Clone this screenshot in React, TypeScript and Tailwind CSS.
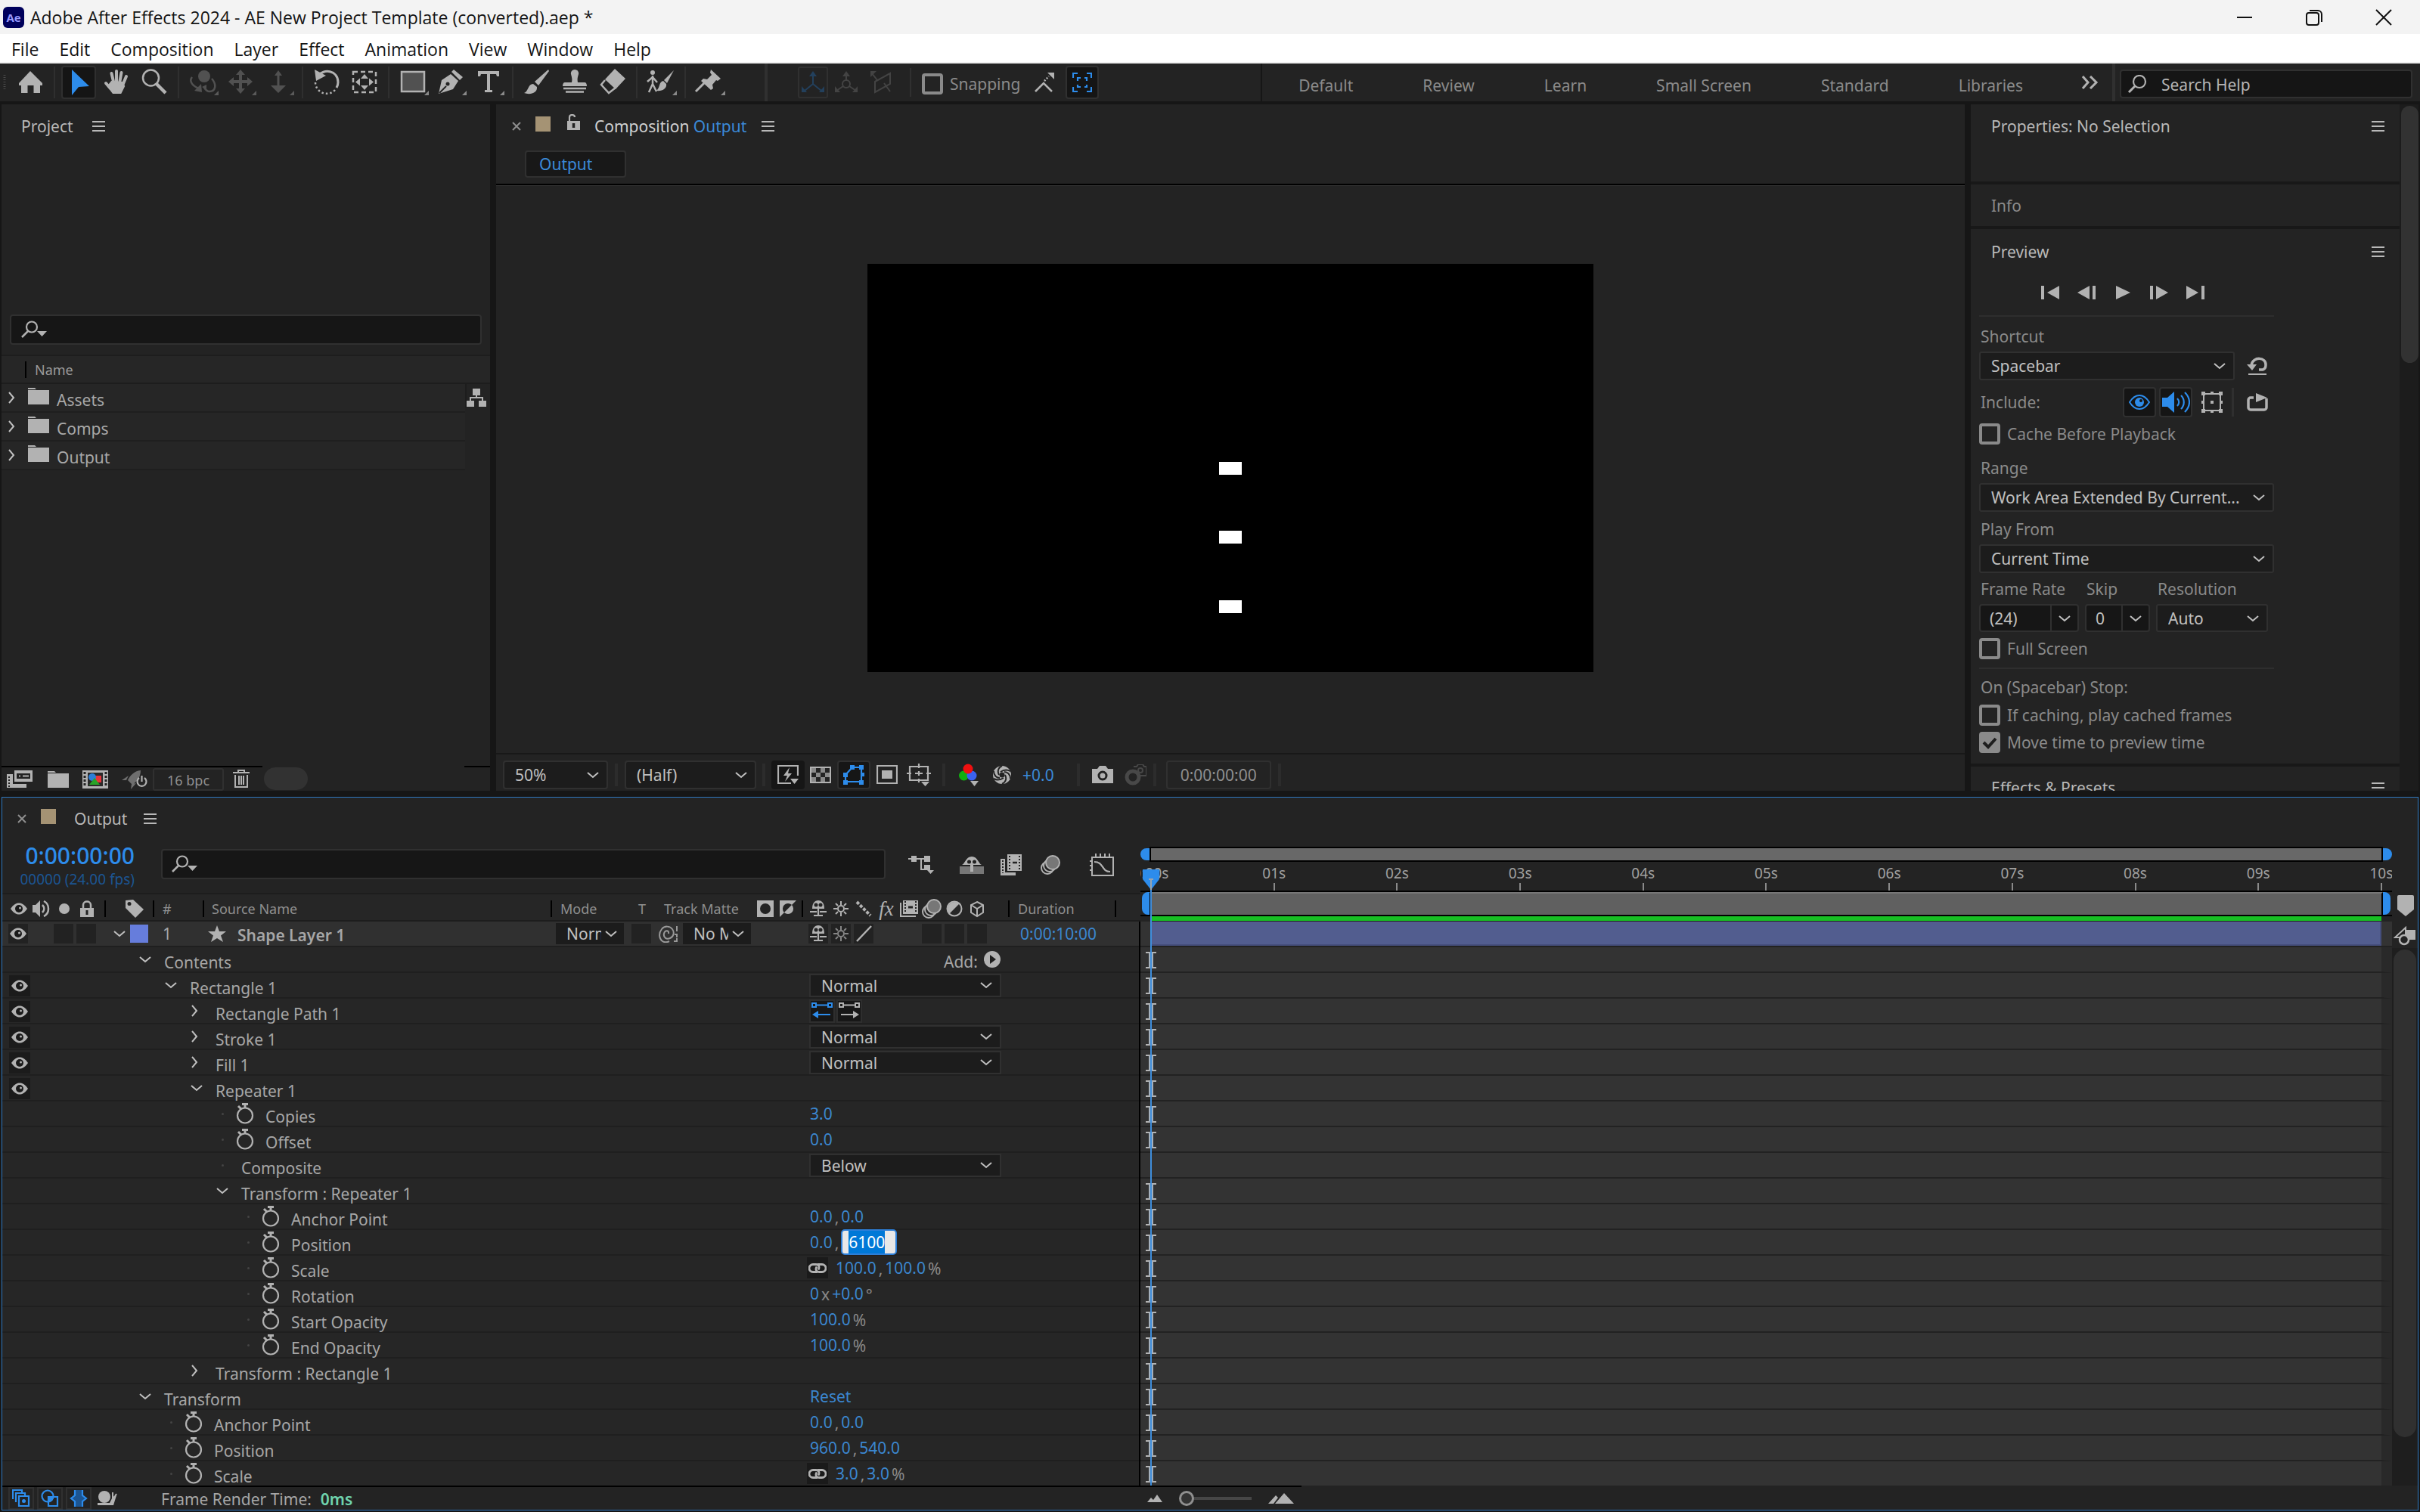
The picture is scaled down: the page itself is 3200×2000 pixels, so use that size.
import { useId } from 'react';
import type { ReactNode } from 'react';

// --- SHARED BITS ---
type SvgProps = { w: number; h: number; className?: string; children: ReactNode };

const Svg = ({ w, h, className = '', children }: SvgProps) => (
  <svg width={w} height={h} viewBox={`0 0 ${w} ${h}`} fill="none" className={`shrink-0 ${className}`} aria-hidden="true">
    {children}
  </svg>
);

const G = '#b2b2b2';
const BLUE = '#2d8ceb';

const ChevronDown = ({ className = '' }: { className?: string }) => (
  <Svg w={16} h={10} className={className}>
    <path d="M1 2l7 6 7-6" stroke="#c0c0c0" strokeWidth="2" />
  </Svg>
);

const ChevronRight = () => (
  <Svg w={10} h={16}>
    <path d="M2 1l6 7-6 7" stroke="#c0c0c0" strokeWidth="2" />
  </Svg>
);

const PanelMenu = ({ label }: { label: string }) => (
  <button type="button" aria-label={label} className="flex">
    <Svg w={17} h={16}>
      <path d="M0 2h17M0 8h17M0 14h17" stroke="#b8b8b8" strokeWidth="2" />
    </Svg>
  </button>
);

const SearchGlyph = () => (
  <Svg w={34} h={24}>
    <circle cx="14" cy="8.500" r="7" stroke={G} strokeWidth="2.200" />
    <path d="M9 14L1 22" stroke={G} strokeWidth="2.500" />
    <path d="M21 14h13l-6.500 7z" fill={G} />
  </Svg>
);

const Eye = () => (
  <Svg w={22} h={16}>
    <path d="M0 8C4 2 8 .5 11 .5S18 2 22 8c-4 6-8 7.500-11 7.500S4 14 0 8z" fill={G} />
    <circle cx="11" cy="8" r="5" fill="#1a1a1a" />
    <circle cx="12.500" cy="7" r="1.500" fill={G} />
  </Svg>
);

const Folder = () => (
  <Svg w={28} h={22}>
    <path d="M0 0h9l2 2H0zM0 3h28v19H0z" fill={G} />
  </Svg>
);

type SelectProps = { label: string; value: string; className: string };

const Select = ({ label, value, className }: SelectProps) => (
  <div className={`relative shrink-0 border-2 border-[#303030] bg-[#1c1c1c] text-[#c0c0c0] ${className}`}>
    <select aria-label={label} defaultValue={value} className="h-full w-full appearance-none bg-transparent pl-[14px] pr-[28px] outline-none">
      <option>{value}</option>
    </select>
    <ChevronDown className="pointer-events-none absolute right-[10px] top-1/2 -mt-[5px]" />
  </div>
);

const Check = ({ label, checked = false }: { label: string; checked?: boolean }) => {
  const id = useId();
  return (
    <div className="flex h-7 items-center gap-[9px]">
      <span className="relative flex h-7 w-7 shrink-0">
        <input
          id={id}
          type="checkbox"
          defaultChecked={checked}
          className="h-7 w-7 appearance-none rounded-[4px] border-4 border-[#8a8a8a] checked:bg-[#8a8a8a]"
        />
        {checked && (
          <Svg w={28} h={28} className="pointer-events-none absolute left-0 top-0">
            <path d="M6 14l6 6L22 9" stroke="#1e1e1e" strokeWidth="4" />
          </Svg>
        )}
      </span>
      <label htmlFor={id} className="whitespace-nowrap">{label}</label>
    </div>
  );
};

// --- TITLE BAR + MENU ---
const TitleBar = () => (
  <header className="flex h-[45px] shrink-0 items-center bg-[#f3f3f3] pl-1 pr-[2px] font-['Open_Sans',sans-serif] text-[23px] text-[#151515]">
    <span className="flex h-7 w-7 shrink-0 items-center justify-center rounded-[6px] bg-[#00005b] text-[15px] font-bold text-[#9999ff]">Ae</span>
    <h1 className="ml-[8px] flex-1 whitespace-nowrap">Adobe After Effects 2024 - AE New Project Template (converted).aep *</h1>
    <button type="button" aria-label="Minimize" className="flex h-full w-[92px] items-center justify-center">
      <Svg w={20} h={20}><path d="M0 10h20" stroke="#111" strokeWidth="2" /></Svg>
    </button>
    <button type="button" aria-label="Restore" className="flex h-full w-[92px] items-center justify-center">
      <Svg w={22} h={22}>
        <rect x="1" y="5" width="16" height="16" rx="3" stroke="#111" strokeWidth="2" />
        <path d="M5 2h11a5 5 0 0 1 5 5v10" stroke="#111" strokeWidth="2" />
      </Svg>
    </button>
    <button type="button" aria-label="Close" className="flex h-full w-[92px] items-center justify-center">
      <Svg w={22} h={22}><path d="M1 1l20 20M21 1L1 21" stroke="#111" strokeWidth="2" /></Svg>
    </button>
  </header>
);

const menus = ['File', 'Edit', 'Composition', 'Layer', 'Effect', 'Animation', 'View', 'Window', 'Help'];

const MenuBar = () => (
  <nav className="flex h-[39px] shrink-0 items-center gap-[27px] border-b-2 border-[#f0f0f0] bg-white pl-[15px] pt-[2px] font-['Open_Sans',sans-serif] text-[23px] text-[#151515]">
    {menus.map((m) => (
      <button key={m} type="button">{m}</button>
    ))}
  </nav>
);

// --- TOOLBAR ---
const D = '#515151';
const corner = <path d="M46 36v6h-6z" fill="#8a8a8a" />;
const cornerDim = <path d="M46 36v6h-6z" fill="#5a5a5a" />;

type Tool = { label: string; icon: ReactNode; on?: boolean };

const toolGroups: Tool[][] = [
  [
    {
      label: 'Home',
      icon: <path d="M25 10l16 16v3h-3v10h-8.500V29h-8v10H13V29h-3v-3z" fill={G} />,
    },
  ],
  [
    { label: 'Selection', on: true, icon: <path d="M16 8l23 22-14 1-9 11z" fill={BLUE} /> },
    {
      label: 'Hand',
      icon: (
        <g stroke={G} strokeWidth="4" strokeLinecap="round">
          <path d="M25 10v15M18.500 13l3 13M31.500 12L29 26M38 17l-5 12M11 26l6 7" />
          <path d="M19 25l13 1 2 4-4 8h-9l-6-8z" fill={G} />
        </g>
      ),
    },
    {
      label: 'Zoom',
      icon: (
        <g stroke={G}>
          <circle cx="20.500" cy="19" r="10.500" strokeWidth="2.500" />
          <path d="M28 27l12 12" strokeWidth="4.500" />
        </g>
      ),
    },
  ],
  [
    {
      label: 'Orbit',
      icon: (
        <>
          <circle cx="27" cy="17" r="8" fill={D} />
          <path d="M11 18c-5 6 2 13 10 15M37 20c7 8 5 17-3 17-3 0-5-2-7-5" stroke={D} strokeWidth="2.500" />
          <path d="M23 27l1 11-10-2z" fill={D} />
          <path d="M24 31l6-3v7z" fill={D} />
          {cornerDim}
        </>
      ),
    },
    {
      label: 'Pan Camera',
      icon: (
        <>
          <path d="M25 14v22M13 24h24" stroke={D} strokeWidth="4" />
          <path d="M25 8l6 7H19zM25 40l6-7H19zM9 24l7-6v12zM41 24l-7-6v12z" fill={D} />
          {cornerDim}
        </>
      ),
    },
    {
      label: 'Dolly',
      icon: (
        <>
          <path d="M25 12v20" stroke={D} strokeWidth="3" />
          <path d="M25 9l5 7H20zM25 39l10-10H15z" fill={D} />
          {cornerDim}
        </>
      ),
    },
  ],
  [
    {
      label: 'Rotation',
      icon: (
        <>
          <path d="M14 16C20 7 40 8 40 25c0 3-1 5-2 7" stroke={G} strokeWidth="3" />
          <path d="M9 8l2 15 13-7z" fill={G} />
          <path d="M36 35a15 15 0 0 1-26-10" stroke={G} strokeWidth="2.500" strokeDasharray="2.500 3" />
        </>
      ),
    },
    {
      label: 'Anchor Point',
      icon: (
        <>
          <rect x="10" y="11" width="30" height="27" stroke={G} strokeWidth="2.500" strokeDasharray="6 4" />
          <path d="M25 14l5 6H20zM25 35l5-6H20zM13 24.500l6-5v10zM37 24.500l-6-5v10z" fill={G} />
        </>
      ),
    },
  ],
  [
    {
      label: 'Rectangle',
      icon: (
        <>
          <rect x="10" y="11" width="30" height="26" fill={D} stroke={G} strokeWidth="2.500" />
          {corner}
        </>
      ),
    },
    {
      label: 'Pen',
      icon: (
        <>
          <path d="M9 40l4-18 12-8 10 9-7 11z" fill={G} />
          <path d="M10 39l9-9" stroke="#232323" strokeWidth="2" />
          <circle cx="21" cy="27" r="2.500" fill="#232323" />
          <path d="M26 11l3-3 12 10-4 4z" fill={G} />
          {corner}
        </>
      ),
    },
    {
      label: 'Type',
      icon: (
        <>
          <path d="M11 10h28v7h-3l-1-3h-8v21h3v3H20v-3h3V14h-8l-1 3h-3z" fill={G} />
          {corner}
        </>
      ),
    },
  ],
  [
    {
      label: 'Brush',
      icon: (
        <>
          <path d="M40 8L22 24l5 5L41 10z" fill={G} />
          <path d="M20 27c-7 0-6 10-12 12 8 3 18 0 17-8z" fill={G} />
        </>
      ),
    },
    {
      label: 'Clone Stamp',
      icon: (
        <>
          <path d="M25 8a5 5 0 0 1 5 6c-1 4-2 6-1 11h9c2 0 3 2 3 5H9c0-3 1-5 3-5h9c1-5 0-7-1-11a5 5 0 0 1 5-6z" fill={G} />
          <path d="M10 33h30M13 37.500h24" stroke={G} strokeWidth="2.500" />
        </>
      ),
    },
    {
      label: 'Eraser',
      icon: (
        <>
          <path d="M28 7l14 13-13 14-14-13z" fill={G} />
          <path d="M15 22l-5 6 10 11 9-7" stroke={G} strokeWidth="2.500" />
        </>
      ),
    },
  ],
  [
    {
      label: 'Roto Brush',
      icon: (
        <>
          <circle cx="14" cy="12" r="3" fill={G} />
          <path d="M14 16v11M14 18l-7 6M14 18l6 7M14 27l-5 11M14 27l5 10" stroke={G} strokeWidth="2.500" />
          <path d="M42 9L29 22l4 4z" fill={G} />
          <path d="M28 23c-6 1-4 9-9 13 8 1 14-3 13-9z" fill={G} />
          {corner}
        </>
      ),
    },
  ],
  [
    {
      label: 'Puppet Pin',
      icon: (
        <>
          <path d="M27 8l13 12-4 3-2-1-5 6 1 5-3 2-13-12 3-3 5 1 6-6-2-3z" fill={G} />
          <path d="M18 26L7 37" stroke={G} strokeWidth="3" />
          {corner}
        </>
      ),
    },
  ],
];

const workspaces = ['Default', 'Review', 'Learn', 'Small Screen', 'Standard', 'Libraries'];

const Toolbar = () => (
  <div className="flex h-[50px] shrink-0 items-center bg-[#232323]">
    <Svg w={15} h={50}>
      <path d="M6 15v20" stroke="#4a4a4a" strokeWidth="3" strokeDasharray="1 2" />
    </Svg>
    {toolGroups.map((group, i) => (
      <div key={i} className="flex items-center">
        {i > 0 && <span className="mx-[6px] h-[42px] w-[2px] bg-[#2f2f2f]" />}
        {group.map((t) => (
          <button
            key={t.label}
            type="button"
            aria-label={t.label}
            className={t.on ? 'mx-[2px] flex h-[44px] w-[46px] items-center justify-center rounded-[4px] border-2 border-[#2f2f2f] bg-[#151515]' : 'flex'}
          >
            <Svg w={50} h={50}>{t.icon}</Svg>
          </button>
        ))}
      </div>
    ))}
    <span className="ml-[48px] h-full w-1 bg-[#303030]" />
    <button type="button" aria-label="Local Axis" className="ml-[40px] flex h-[42px] w-[40px] items-center justify-center rounded-[3px] border-2 border-[#303030]">
      <Svg w={30} h={30}>
        <path d="M15 17V4M15 17L4 26M15 17l11 9" stroke="#23405c" strokeWidth="2" />
        <path d="M15 0l5 7H10zM0 28v-8l7 8zM30 28v-8l-7 8z" fill="#23405c" />
      </Svg>
    </button>
    <button type="button" aria-label="World Axis" className="ml-[8px] flex">
      <Svg w={32} h={30}>
        <circle cx="16" cy="17" r="5" stroke="#434343" strokeWidth="2" />
        <path d="M16 12V4M12 20l-9 6M20 20l9 6" stroke="#434343" strokeWidth="2" />
        <path d="M16 0l5 7H11zM1 28v-8l7 8zM31 28v-8l-7 8z" fill="#434343" />
      </Svg>
    </button>
    <button type="button" aria-label="View Axis" className="ml-[16px] flex">
      <Svg w={30} h={30}>
        <path d="M2 3l7 9M6 14l20-11v14L6 28zM18 16l8 11" stroke="#434343" strokeWidth="2" />
        <path d="M0 0h8L0 8z" fill="#434343" />
      </Svg>
    </button>
    <span className="ml-[22px] mr-[14px] h-[38px] w-[2px] bg-[#303030]" />
    <div className="pt-[4px] text-[#8a8a8a]"><Check label="Snapping" /></div>
    <button type="button" aria-label="Snap Edges" className="ml-[18px] flex">
      <Svg w={28} h={28}>
        <path d="M2 26l11-11 11 11" stroke={G} strokeWidth="2.500" />
        <path d="M14 12l6-6" stroke={G} strokeWidth="2.500" strokeDasharray="2 2" />
        <path d="M18 1h9v9z" fill={G} />
      </Svg>
    </button>
    <button type="button" aria-label="Snap Features" className="ml-[14px] flex h-[44px] w-[44px] items-center justify-center rounded-[4px] border-2 border-[#303030] bg-[#151515]">
      <Svg w={26} h={26}>
        <path d="M1 7V1h6M19 1h6v6M25 19v6h-6M7 25H1v-6M7 11V7h4M16 7h3v4M19 16v3h-3M11 19H7v-3" stroke={BLUE} strokeWidth="2.200" />
      </Svg>
    </button>
    <span className="ml-[214px] h-full w-[2px] bg-[#161616]" />
    <nav className="flex flex-1 items-center justify-end gap-[92px] pt-[8px] text-[#8a8a8a]">
      {workspaces.map((w) => (
        <button key={w} type="button" className="whitespace-nowrap">{w}</button>
      ))}
    </nav>
    <button type="button" aria-label="More Workspaces" className="ml-[77px] mr-[18px] flex">
      <Svg w={23} h={18}>
        <path d="M2 1l7 8-7 8M12 1l8 8-8 8" stroke={G} strokeWidth="3" />
      </Svg>
    </button>
    <span className="h-full w-1 bg-[#303030]" />
    <label className="ml-[6px] mr-[10px] mt-1 flex h-[38px] w-[387px] items-center rounded-[4px] border-2 border-[#303030] bg-[#151515] pl-[8px]">
      <Svg w={26} h={24}>
        <circle cx="16" cy="9" r="8" stroke={G} strokeWidth="2.200" />
        <path d="M10 15l-8 8" stroke={G} strokeWidth="3" />
      </Svg>
      <input aria-label="Search Help" placeholder="Search Help" className="ml-[19px] w-full bg-transparent pt-[2px] outline-none placeholder:text-[#b4b4b4]" />
    </label>
  </div>
);

// --- PROJECT PANEL ---
const ProjectPanel = () => (
  <section className="flex w-[646px] shrink-0 flex-col bg-[#232323]">
    <div className="flex h-[58px] shrink-0 items-center gap-[25px] pl-[26px] text-[#b8b8b8]">
      <h2>Project</h2>
      <PanelMenu label="Project menu" />
    </div>
    <label className="mx-[11px] mt-[220px] flex h-[40px] shrink-0 items-center rounded-[4px] border-2 border-[#303030] bg-[#161616] pl-[13px]">
      <SearchGlyph />
      <input aria-label="Search project" className="ml-2 w-full bg-transparent outline-none" />
    </label>
    <div className="mt-[13px] flex h-[39px] shrink-0 items-center border-y-2 border-[#1d1d1d] bg-[#262626] pl-[31px] text-[18px] text-[#9a9a9a]">
      <span className="mr-[11px] h-[22px] w-[2px] bg-black" />
      Name
    </div>
    <div className="flex flex-1">
      <ul className="flex-1">
        {['Assets', 'Comps', 'Output'].map((name) => (
          <li key={name} className="flex h-[38px] items-center border-b-2 border-[#1f1f1f] bg-[#262626] pl-[8px] text-[#a8a8a8]">
            <button type="button" aria-label={`Expand ${name}`} className="flex"><ChevronRight /></button>
            <span className="-mt-1 ml-[17px]"><Folder /></span>
            <span className="ml-[10px] pt-[5px]">{name}</span>
          </li>
        ))}
      </ul>
      <button type="button" aria-label="Project Flowchart" className="flex w-[33px] self-start border-l-2 border-[#1d1d1d] pt-[6px]">
        <Svg w={26} h={25}>
          <path d="M8 0h10v9H8zM0 16h10v8H0zM16 16h10v8H16z" fill={G} />
          <path d="M13 8v5M5 17v-5h16v5" stroke={G} strokeWidth="2" />
        </Svg>
      </button>
    </div>
    <div className="flex h-[33px] shrink-0">
      <div className="flex w-[345px] items-center border-t-2 border-black pl-[7px]">
        <button type="button" aria-label="Interpret Footage" className="flex">
          <Svg w={35} h={24}>
            <path d="M10 0h24v15H10z" fill={G} />
            <path d="M13 4h18v7H13z" fill="#232323" />
            <path d="M16 7.500h2M21 7.500h8" stroke={G} strokeWidth="2" />
            <path d="M0 5h8v13h18v5H0z" fill={G} />
            <path d="M3 8v14" stroke="#232323" strokeWidth="2" strokeDasharray="2 2" />
          </Svg>
        </button>
        <button type="button" aria-label="New Folder" className="ml-[19px] flex"><Folder /></button>
        <button type="button" aria-label="New Composition" className="ml-[18px] flex">
          <Svg w={34} h={24}>
            <path d="M0 0h34v24H0z" fill={G} />
            <path d="M3 2v20M31 2v20" stroke="#232323" strokeWidth="3" strokeDasharray="3 2" />
            <path d="M7 3h20v18H7z" fill="#2a2a2a" />
            <path d="M17 7h8v9h-8z" fill="#e8343a" />
            <circle cx="13" cy="9" r="5" fill="#2d7fd8" />
            <path d="M16 10l7 9H9z" fill="#28a428" />
          </Svg>
        </button>
        <button type="button" aria-label="GPU Acceleration" className="ml-[17px] flex">
          <Svg w={35} h={26}>
            <path d="M26 1c-9 1-14 7-17 13l6 6c6-4 11-10 11-19zM10 8l-9 6h6zM14 19l-1 7 7-8z" fill="#6e6e6e" />
            <path d="M24 11a6 6 0 1 0 7 0M27.500 8v8" stroke={G} strokeWidth="2.200" />
          </Svg>
        </button>
        <button type="button" className="ml-[7px] h-[30px] w-[94px] rounded-[3px] border-2 border-[#303030] pt-[2px] text-[18px] leading-6 text-[#8f8f8f]">16 bpc</button>
        <button type="button" aria-label="Delete" className="ml-[12px] flex">
          <Svg w={22} h={25}>
            <path d="M0 4h22M7 4V1h8v3M3 7v16h16V7M8 8v12M11 8v12M14 8v12" stroke={G} strokeWidth="2" />
          </Svg>
        </button>
      </div>
      <div className="flex-1 p-[2px]">
        <div className="h-[30px] w-[58px] rounded-full bg-[#323232]" />
      </div>
      <div className="w-[34px] border-t-2 border-black" />
    </div>
  </section>
);

// --- COMPOSITION PANEL ---
const Swatch = () => <span className="h-[20px] w-[20px] bg-[#a59374]" />;

const CloseTab = () => (
  <button type="button" aria-label="Close tab" className="flex">
    <Svg w={12} h={12}><path d="M1 1l10 10M11 1L1 11" stroke="#8f8f8f" strokeWidth="2" /></Svg>
  </button>
);

const FootSep = ({ className = '' }: { className?: string }) => <span className={`h-[30px] w-1 shrink-0 bg-[#2c2c2c] ${className}`} />;

const CompositionPanel = () => (
  <section className="flex min-w-0 flex-1 flex-col bg-[#232323]">
    <div className="flex h-[58px] shrink-0 items-center pl-[21px]">
      <CloseTab />
      <span className="-mt-[6px] ml-[19px] flex"><Swatch /></span>
      <button type="button" aria-label="Lock panel" className="-mt-[10px] ml-[21px] flex">
        <Svg w={18} h={22}>
          <path d="M1 9h17v12H1z" fill={G} />
          <path d="M4 9V4c0-4 7-4 7 0" stroke={G} strokeWidth="2.200" />
          <path d="M9.500 12v6" stroke="#232323" strokeWidth="3.500" />
        </Svg>
      </button>
      <h2 className="ml-[19px] mr-[20px] text-[#d0d0d0]">Composition <span className="text-[#3b8ad8]">Output</span></h2>
      <PanelMenu label="Composition menu" />
    </div>
    <div className="flex h-[49px] shrink-0 items-center border-b-2 border-black pl-[38px]">
      <button type="button" className="mb-[6px] h-[36px] w-[134px] rounded-[4px] border-2 border-[#303030] bg-[#181818] pl-[17px] text-left text-[#3b8ad8]">Output</button>
    </div>
    <div className="flex min-h-0 flex-1 items-center justify-center border-b-2 border-t border-b-[#181818] border-t-[#333] pb-[4px]">
      <svg viewBox="0 0 960 540" className="w-[960px] max-w-full bg-black" role="img" aria-label="Output preview">
        <path d="M465 262h30v17h-30zM465 353h30v17h-30zM465 445h30v17h-30z" fill="#fff" />
      </svg>
    </div>
    <div className="flex h-[48px] shrink-0 items-center pl-[9px] pt-[5px]">
      <Select label="Magnification" value="50%" className="h-[38px] w-[139px] rounded-[4px] text-[#aaa]" />
      <FootSep className="mx-[9px]" />
      <Select label="Resolution" value="(Half)" className="h-[38px] w-[174px] rounded-[4px] text-[#aaa]" />
      <FootSep className="mx-[8px]" />
      <button type="button" aria-label="Fast Previews" className="flex h-[38px] w-[44px] items-center justify-center rounded-[4px] bg-[#161616]">
        <Svg w={28} h={26}>
          <path d="M18 24H1V1h26v13" stroke={G} strokeWidth="2.200" />
          <path d="M16 3L8 14h5l-3 8 9-11h-5z" fill={G} />
          <path d="M17 18h11l-5.500 7z" fill={G} />
        </Svg>
      </button>
      <button type="button" aria-label="Transparency Grid" className="ml-[7px] flex">
        <Svg w={28} h={22}>
          <path d="M1 1h26v20H1z" stroke={G} strokeWidth="2" />
          <path d="M2 2h6v6H2zM14 2h6v6h-6zM8 8h6v6H8zM20 8h6v6h-6zM2 14h6v6H2zM14 14h6v6h-6z" fill="#8a8a8a" />
        </Svg>
      </button>
      <button type="button" aria-label="Mask Visibility" className="ml-[8px] flex h-[38px] w-[44px] items-center justify-center rounded-[4px] border-2 border-[#303030] bg-[#161616]">
        <Svg w={30} h={26}>
          <path d="M13 3h12v19H4v-9z" stroke={BLUE} strokeWidth="2.200" />
          <path d="M10 0h6v6h-6zM22 0h6v6h-6zM1 10h6v6H1zM24 10h5v5h-5zM1 20h6v6H1zM22 20h6v6h-6z" fill={BLUE} />
        </Svg>
      </button>
      <button type="button" aria-label="Region of Interest" className="ml-[8px] flex">
        <Svg w={28} h={25}>
          <path d="M1 1h26v23H1z" stroke={G} strokeWidth="2.200" />
          <path d="M7 7h14v11H7z" fill={G} />
        </Svg>
      </button>
      <button type="button" aria-label="Grid and Guides" className="ml-[12px] flex">
        <Svg w={32} h={30}>
          <path d="M4 4h24v18H4z" stroke={G} strokeWidth="2.200" />
          <path d="M16 0v6M16 10v6M16 20v5M0 13h6M11 13h10M26 13h6" stroke={G} strokeWidth="2.200" />
          <path d="M19 24h11l-5.500 6z" fill={G} />
        </Svg>
      </button>
      <FootSep className="mx-[15px]" />
      <button type="button" aria-label="Channels" className="ml-[3px] flex">
        <Svg w={26} h={30}>
          <circle cx="6.500" cy="16" r="6.500" fill="#10b010" />
          <circle cx="17" cy="16" r="6.500" fill="#3a62f0" />
          <circle cx="12" cy="7" r="6.500" fill="#f01010" />
          <path d="M15 23h11l-5.500 7z" fill={G} />
        </Svg>
      </button>
      <button type="button" aria-label="Reset Exposure" className="ml-[18px] flex">
        <Svg w={26} h={26}>
          <circle cx="13" cy="13" r="12" fill={G} />
          <path d="M13 1c-6 3-6 8-4 12M24 8c-6-3-10-1-13 1M24 18c0-6-4-9-8-9M13 25c6-3 6-8 4-12M2 18c6 3 10 1 13-1M2 8c0 6 4 9 8 9" stroke="#232323" strokeWidth="2" />
          <circle cx="13" cy="13" r="3.500" fill="#232323" />
        </Svg>
      </button>
      <span className="ml-[14px] text-[#3b8ad8]">+0.0</span>
      <FootSep className="ml-[30px] mr-[16px]" />
      <button type="button" aria-label="Take Snapshot" className="flex">
        <Svg w={28} h={24}>
          <path d="M0 4h7l3-4h8l3 4h7v19H0z" fill={G} />
          <circle cx="14" cy="13" r="5" stroke="#232323" strokeWidth="3" />
        </Svg>
      </button>
      <button type="button" aria-label="Show Snapshot" className="ml-[14px] flex">
        <Svg w={30} h={28}>
          <circle cx="12" cy="17" r="8" stroke="#484848" strokeWidth="5" />
          <path d="M13 3h4l2-3h6l2 3h3v12H20" stroke="#484848" strokeWidth="2" />
          <circle cx="22" cy="8" r="3" stroke="#484848" strokeWidth="2" />
        </Svg>
      </button>
      <FootSep className="mx-[9px]" />
      <button type="button" className="ml-[4px] h-[38px] w-[139px] rounded-[4px] border-2 border-[#303030] text-[#8f8f8f]">0:00:00:00</button>
      <FootSep className="ml-[9px]" />
    </div>
  </section>
);

// --- RIGHT COLUMN ---
const Field = ({ label, children, className = '' }: { label: string; children: ReactNode; className?: string }) => (
  <div className={className}>
    <div className="mb-[5px] h-[30px] pl-[2px] leading-[30px]">{label}</div>
    {children}
  </div>
);

const Combo = ({ label, value, className }: { label: string; value: string; className: string }) => (
  <div className={`flex h-[37px] items-stretch rounded-[4px] border-2 border-[#303030] bg-[#161616] text-[#c0c0c0] ${className}`}>
    <input aria-label={label} defaultValue={value} className="w-full min-w-0 flex-1 bg-transparent pl-[12px] outline-none" />
    <button type="button" aria-label={`${label} options`} className="flex w-[36px] shrink-0 items-center justify-center border-l-2 border-[#303030]">
      <ChevronDown />
    </button>
  </div>
);

const transport = [
  { label: 'First Frame', d: 'M0 0h4v18H0zM24 0v18L8 9z' },
  { label: 'Previous Frame', d: 'M0 9L16 0v18zM20 0h4v18h-4z' },
  { label: 'Play', d: 'M3 0l19 9-19 9z' },
  { label: 'Next Frame', d: 'M0 0h4v18H0zM8 0l16 9-16 9z' },
  { label: 'Last Frame', d: 'M0 0l16 9-16 9zM20 0h4v18h-4z' },
];

const SidePanels = () => (
  <aside className="flex w-[592px] shrink-0 overflow-hidden">
    <div className="flex min-w-0 flex-1 flex-col bg-[#232323] text-[#8a8a8a]">
      <div className="flex h-[58px] shrink-0 items-center justify-between pl-[27px] pr-[20px] text-[#b8b8b8]">
        <h2>Properties: No Selection</h2>
        <PanelMenu label="Properties menu" />
      </div>
      <div className="mt-[44px] flex h-[63px] shrink-0 items-center border-y-4 border-[#181818] pl-[27px]">
        <h2>Info</h2>
      </div>
      <div className="flex h-[60px] shrink-0 items-center justify-between pl-[27px] pr-[20px] text-[#b8b8b8]">
        <h2>Preview</h2>
        <PanelMenu label="Preview menu" />
      </div>
      <div className="ml-[11px] w-[390px] shrink-0">
        <div className="flex h-[48px] items-center gap-[24px] pl-[82px]">
          {transport.map((t) => (
            <button key={t.label} type="button" aria-label={t.label} className="flex">
              <Svg w={24} h={18}><path d={t.d} fill={G} /></Svg>
            </button>
          ))}
        </div>
        <hr className="mt-[6px] border-t-2 border-[#2e2e2e]" />
        <Field label="Shortcut" className="mt-[11px]">
          <div className="flex items-center gap-[16px]">
            <Select label="Shortcut" value="Spacebar" className="h-[38px] w-[338px] rounded-[3px]" />
            <button type="button" aria-label="Reset" className="flex">
              <Svg w={28} h={26}>
                <path d="M6 12C8 0 26 1 25 12c0 3-1 5-4 6h-5" stroke={G} strokeWidth="3.500" />
                <path d="M0 11h13l-6 8z" fill={G} />
                <path d="M2 24h24" stroke={G} strokeWidth="2" />
              </Svg>
            </button>
          </div>
        </Field>
        <div className="mt-[9px] flex h-[40px] items-center">
          <span className="w-[190px] pl-[2px]">Include:</span>
          <button type="button" aria-label="Include Video" className="flex h-[40px] w-[44px] items-center justify-center rounded-[4px] border-2 border-[#303030] bg-[#151515]">
            <Svg w={28} h={20}>
              <path d="M1 10C6 2 10 1 14 1s8 1 13 9c-5 8-9 9-13 9S6 18 1 10z" stroke={BLUE} strokeWidth="2" />
              <circle cx="14" cy="10" r="6" fill={BLUE} />
              <circle cx="16" cy="8" r="2" fill="#151515" />
            </Svg>
          </button>
          <button type="button" aria-label="Include Audio" className="ml-[4px] flex h-[40px] w-[44px] items-center justify-center rounded-[4px] border-2 border-[#303030] bg-[#151515]">
            <Svg w={38} h={28}>
              <path d="M1 8h7l9-8v28l-9-8H1z" fill={BLUE} />
              <path d="M21 9c3 3 3 7 0 10M26 5c5 5 5 13 0 18M31 1c8 8 8 18 0 26" stroke={BLUE} strokeWidth="2.200" />
            </Svg>
          </button>
          <button type="button" aria-label="Include Overlays" className="ml-[12px] flex">
            <Svg w={28} h={28}>
              <path d="M3 3h22v22H3z" stroke={G} strokeWidth="2" />
              <path d="M0 0h5v5H0zM23 0h5v5h-5zM0 23h5v5H0zM23 23h5v5h-5zM12 0h4v4h-4zM12 24h4v4h-4zM0 12h4v4H0zM24 12h4v4h-4zM12 12h4v4h-4z" fill={G} />
            </Svg>
          </button>
          <span className="ml-[12px] h-[38px] w-[3px] bg-[#2f2f2f]" />
          <button type="button" aria-label="Loop" className="ml-[17px] flex">
            <Svg w={28} h={24}>
              <path d="M9 6H5a3 3 0 0 0-3 3v10a3 3 0 0 0 3 3h18a3 3 0 0 0 3-3V7" stroke={G} strokeWidth="3.500" />
              <path d="M12 0l15 6-15 6z" fill={G} />
            </Svg>
          </button>
        </div>
        <div className="mt-2"><Check label="Cache Before Playback" /></div>
        <Field label="Range" className="mt-4">
          <Select label="Range" value="Work Area Extended By Current..." className="h-[38px] w-full rounded-[3px]" />
        </Field>
        <Field label="Play From" className="mt-[8px]">
          <Select label="Play From" value="Current Time" className="h-[38px] w-full rounded-[3px]" />
        </Field>
        <div className="mt-[6px] flex gap-[8px]">
          <Field label="Frame Rate"><Combo label="Frame Rate" value="(24)" className="w-[132px]" /></Field>
          <Field label="Skip"><Combo label="Skip" value="0" className="w-[86px]" /></Field>
          <Field label="Resolution"><Select label="Resolution" value="Auto" className="h-[37px] w-[148px] rounded-[3px]" /></Field>
        </div>
        <div className="mt-2"><Check label="Full Screen" /></div>
        <hr className="mt-[11px] border-t-2 border-[#2e2e2e]" />
        <div className="mt-[9px] h-[30px] pl-[2px] leading-[30px]">On (Spacebar) Stop:</div>
        <div className="mt-2 flex flex-col gap-2">
          <Check label="If caching, play cached frames" />
          <Check label="Move time to preview time" checked />
        </div>
      </div>
      <div className="mt-[14px] flex h-[60px] shrink-0 items-center justify-between border-t-4 border-[#181818] pl-[27px] pr-[20px] text-[#b8b8b8]">
        <h2>Effects &amp; Presets</h2>
        <PanelMenu label="Effects menu" />
      </div>
    </div>
    <div className="w-[25px] bg-[#1c1c1c] pl-[2px] pt-[2px]">
      <div className="h-[340px] w-[23px] rounded-full bg-[#323232]" />
    </div>
  </aside>
);

// --- TIMELINE ---
const Stopwatch = () => (
  <Svg w={26} h={28}>
    <circle cx="13" cy="16.500" r="10" stroke={G} strokeWidth="2.200" />
    <path d="M9 1.500h8M13 1v5M4 4l4 4" stroke={G} strokeWidth="3" />
  </Svg>
);

const Num = ({ children }: { children: ReactNode }) => <span className="text-[#3b86d0]">{children}</span>;
const Unit = ({ children }: { children: ReactNode }) => <span className="px-[3px] pt-[2px] text-[#8a8a8a]">{children}</span>;

const Link = () => (
  <button type="button" aria-label="Constrain Proportions" className="-ml-1 mr-[10px] flex h-[28px] w-[28px] items-center justify-center bg-[#1a1a1a]">
    <Svg w={24} h={15}>
      <path d="M12 12.500H6a5 5 0 0 1 0-10h4c4 0 5 4 3 7M12 2.500h6a5 5 0 0 1 0 10h-4c-4 0-5-4-3-7" stroke={G} strokeWidth="2.800" />
    </Svg>
  </button>
);

const pair = (a: string, b: string) => (
  <>
    <Num>{a}</Num><Unit>,</Unit><Num>{b}</Num>
  </>
);

const blendSelect = (label: string, value: string) => (
  <Select label={label} value={value} className="-ml-px h-[31px] w-[254px]" />
);

type Row = { name: string; level: number; open?: boolean; leaf?: 'watch' | 'plain'; eye?: boolean; value?: ReactNode };

const rows: Row[] = [
  {
    name: 'Contents',
    level: 0,
    open: true,
    value: (
      <span className="ml-[177px] flex items-center gap-[8px] text-[#a6a6a6]">
        <span className="pt-[6px]">Add:</span>
        <button type="button" aria-label="Add" className="flex">
          <Svg w={22} h={22}>
            <circle cx="11" cy="11" r="11" fill={G} />
            <path d="M8 5l8 6-8 6z" fill="#1d1d1d" />
          </Svg>
        </button>
      </span>
    ),
  },
  { name: 'Rectangle 1', level: 1, open: true, eye: true, value: blendSelect('Rectangle 1 blend', 'Normal') },
  {
    name: 'Rectangle Path 1',
    level: 2,
    open: false,
    eye: true,
    value: (
      <span className="-ml-px flex gap-[2px]">
        {[BLUE, G].map((c, i) => (
          <button key={c} type="button" aria-label={i ? 'Path forward' : 'Path reversed'} className="flex h-[31px] w-[34px] items-center justify-center border-2 border-[#2e2e2e] bg-[#171717]">
            <Svg w={30} h={24}>
              <path d="M2 2h5v5H2zM23 2h5v5h-5zM7 4.500h16" stroke={c} strokeWidth="2" />
              <path d={i ? 'M4 17h18' : 'M8 17h18'} stroke={c} strokeWidth="2" />
              <path d={i ? 'M20 12l8 5-8 5z' : 'M10 12l-8 5 8 5z'} fill={c} />
            </Svg>
          </button>
        ))}
      </span>
    ),
  },
  { name: 'Stroke 1', level: 2, open: false, eye: true, value: blendSelect('Stroke 1 blend', 'Normal') },
  { name: 'Fill 1', level: 2, open: false, eye: true, value: blendSelect('Fill 1 blend', 'Normal') },
  { name: 'Repeater 1', level: 2, open: true, eye: true },
  { name: 'Copies', level: 3, leaf: 'watch', value: <Num>3.0</Num> },
  { name: 'Offset', level: 3, leaf: 'watch', value: <Num>0.0</Num> },
  { name: 'Composite', level: 3, leaf: 'plain', value: blendSelect('Composite', 'Below') },
  { name: 'Transform : Repeater 1', level: 3, open: true },
  { name: 'Anchor Point', level: 4, leaf: 'watch', value: pair('0.0', '0.0') },
  {
    name: 'Position',
    level: 4,
    leaf: 'watch',
    value: (
      <>
        <Num>0.0</Num><Unit>,</Unit>
        <span className="flex h-[34px] w-[74px] items-center rounded-[5px] border-2 border-[#2d7fd8] bg-[#e8e8e8] pl-[8px]">
          <input aria-label="Position Y" defaultValue="6100" className="h-full w-[48px] bg-[#0078d7] text-white outline-none" />
        </span>
      </>
    ),
  },
  { name: 'Scale', level: 4, leaf: 'watch', value: <><Link />{pair('100.0', '100.0')}<Unit>%</Unit></> },
  { name: 'Rotation', level: 4, leaf: 'watch', value: <><Num>0</Num><Unit>x</Unit><Num>+0.0</Num><Unit>°</Unit></> },
  { name: 'Start Opacity', level: 4, leaf: 'watch', value: <><Num>100.0</Num><Unit>%</Unit></> },
  { name: 'End Opacity', level: 4, leaf: 'watch', value: <><Num>100.0</Num><Unit>%</Unit></> },
  { name: 'Transform : Rectangle 1', level: 2, open: false },
  { name: 'Transform', level: 0, open: true, value: <Num>Reset</Num> },
  { name: 'Anchor Point', level: 1, leaf: 'watch', value: pair('0.0', '0.0') },
  { name: 'Position', level: 1, leaf: 'watch', value: pair('960.0', '540.0') },
  { name: 'Scale', level: 1, leaf: 'watch', value: <><Link />{pair('3.0', '3.0')}<Unit>%</Unit></> },
];

const indents = ['pl-[35px]', 'pl-[69px]', 'pl-[103px]', 'pl-[137px]', 'pl-[171px]'];

const PropertyRow = ({ row }: { row: Row }) => (
  <div className="flex h-[34px] shrink-0 border-b-2 border-[#1f1f1f] bg-[#262626]">
    <div className="w-[137px] shrink-0 pl-[9px]">
      {row.eye && (
        <button type="button" aria-label={`Toggle ${row.name}`} className="mt-[3px] flex h-[28px] w-[28px] items-center justify-center bg-[#1b1b1b]">
          <Eye />
        </button>
      )}
    </div>
    <div className={`flex w-[927px] shrink-0 items-center ${indents[row.level]}`}>
      <span className="flex w-[34px] shrink-0 justify-center">
        {row.leaf ? (
          <span className="h-[3px] w-[3px] rounded-full bg-[#444]" />
        ) : (
          <button type="button" aria-label={`Toggle ${row.name} group`} className="flex w-[16px]">
            {row.open ? <ChevronDown /> : <ChevronRight />}
          </button>
        )}
      </span>
      {row.leaf === 'watch' && <button type="button" aria-label={`Animate ${row.name}`} className="mr-[6px] flex"><Stopwatch /></button>}
      <span className="whitespace-nowrap pl-[8px] pt-[7px] text-[#a6a6a6]">{row.name}</span>
    </div>
    <div className="flex flex-1 items-center pl-1">{row.value}</div>
  </div>
);

const HeadSep = () => <span className="h-[22px] w-[2px] shrink-0 bg-black" />;

// Layer switch glyphs, all drawn on a 26x26 cell
const Shy = () => (
  <Svg w={26} h={26}>
    <path d="M5 13c0-7 3-11 8-11s8 4 8 11z" fill={G} />
    <circle cx="10" cy="8" r="2.500" fill="#232323" />
    <circle cx="16" cy="8" r="2.500" fill="#232323" />
    <path d="M2 17h9M15 17h9M13 13v10M7 22h12" stroke={G} strokeWidth="2.200" />
  </Svg>
);
const Sun = ({ dim = false }: { dim?: boolean }) => (
  <Svg w={26} h={26}>
    <circle cx="13" cy="13" r="4" stroke={dim ? '#858585' : G} strokeWidth="2" />
    <path d="M13 3v5M13 18v5M3 13h5M18 13h5M6 6l3 3M17 17l3 3M6 20l3-3M17 9l3-3" stroke={dim ? '#858585' : G} strokeWidth="2" />
  </Svg>
);
const FrameBlend = () => (
  <Svg w={26} h={26}>
    <path d="M5 2h20v18H5z" fill={G} />
    <path d="M8 3v16M22 3v16" stroke="#232323" strokeWidth="2" strokeDasharray="2 2" />
    <path d="M12 11h6" stroke="#232323" strokeWidth="3" />
    <path d="M2 5v18h20" stroke={G} strokeWidth="2" />
  </Svg>
);
const MotionBlur = () => (
  <Svg w={28} h={28}>
    <circle cx="10" cy="18" r="8" stroke={G} strokeWidth="2" />
    <circle cx="13" cy="15" r="8" fill="#232323" stroke={G} strokeWidth="2" />
    <circle cx="17" cy="11" r="9" fill="#777" stroke={G} strokeWidth="2" />
  </Svg>
);

const switchHeads: ReactNode[] = [
  <Shy key="shy" />,
  <Sun key="sun" />,
  <Svg key="quality" w={26} h={26}><path d="M4 4l18 18" stroke={G} strokeWidth="4" strokeDasharray="4 2" /></Svg>,
  <i key="fx" className="font-['Liberation_Serif',serif] text-[27px] leading-6 text-[#b2b2b2]">fx</i>,
  <FrameBlend key="blend" />,
  <MotionBlur key="blur" />,
  <Svg key="adjust" w={26} h={26}>
    <circle cx="13" cy="13" r="9.500" stroke={G} strokeWidth="2" />
    <path d="M19.700 6.300A9.500 9.500 0 0 0 6.300 19.700z" fill={G} />
  </Svg>,
  <Svg key="cube" w={26} h={26}>
    <path d="M13 4l8 4v10l-8 5-8-5V8zM5 8l8 5 8-5M13 13v10" stroke={G} strokeWidth="2" />
  </Svg>,
];

const ColumnHeads = () => (
  <div className="flex h-[38px] shrink-0 items-center border-b-2 border-t-2 border-[#1d1d1d] bg-[#262626] pt-[3px] text-[18px] text-[#8f8f8f]">
    <div className="flex w-[137px] shrink-0 items-center pl-[7px]">
      <span className="flex w-[30px] justify-center"><Eye /></span>
      <span className="flex w-[30px] justify-center">
        <Svg w={24} h={22}>
          <path d="M0 6h4l6-6v22l-6-6H0z" fill={G} />
          <path d="M13 6c3 3 3 7 0 10M15 1c8 4 8 16 0 20" stroke={G} strokeWidth="2.500" />
        </Svg>
      </span>
      <span className="flex w-[30px] justify-center"><span className="h-[14px] w-[14px] rounded-full bg-[#b2b2b2]" /></span>
      <span className="flex w-[30px] justify-center">
        <Svg w={18} h={22}>
          <path d="M0 10h18v12H0z" fill={G} />
          <path d="M4 10V6c0-6 10-6 10 0v4" stroke={G} strokeWidth="2.500" />
          <path d="M9 13v6" stroke="#232323" strokeWidth="3" />
        </Svg>
      </span>
      <span className="flex-1" />
      <HeadSep />
    </div>
    <div className="flex w-[64px] shrink-0 items-center justify-between pl-[25px]">
      <Svg w={25} h={24}>
        <path d="M1 1l10-1 14 13-11 11L1 11z" fill={G} />
        <circle cx="6" cy="5.500" r="2.500" fill="#232323" />
      </Svg>
      <HeadSep />
    </div>
    <div className="flex w-[66px] shrink-0 items-center justify-between pl-[11px]"># <HeadSep /></div>
    <div className="flex w-[460px] shrink-0 items-center justify-between pl-[10px]">Source Name <HeadSep /></div>
    <div className="flex w-[332px] shrink-0 items-center pl-[11px]">
      <span className="w-[103px]">Mode</span>
      <span className="w-[34px]">T</span>
      <span className="w-[123px]">Track Matte</span>
      <Svg w={22} h={22}><path d="M0 0h22v22H0z" fill={G} /><circle cx="11" cy="11" r="7" fill="#232323" /></Svg>
      <Svg w={22} h={22} className="ml-2">
        <path d="M0 0h22L0 22z" fill={G} />
        <path d="M16 6a7 7 0 0 0-10 10z" fill="#232323" />
        <path d="M16 6a7 7 0 0 1-10 10z" fill={G} />
      </Svg>
      <span className="flex-1" />
      <HeadSep />
    </div>
    <div className="flex w-[273px] shrink-0 items-center pl-[5px]">
      {switchHeads.map((icon, i) => (
        <span key={i} className="flex w-[30px] shrink-0 justify-center">{icon}</span>
      ))}
      <span className="flex-1" />
      <HeadSep />
    </div>
    <div className="flex w-[141px] shrink-0 items-center justify-between pl-[11px]">Duration <HeadSep /></div>
  </div>
);

const Box = ({ children }: { children?: ReactNode }) => (
  <span className="flex h-[26px] w-[26px] shrink-0 items-center justify-center bg-[#222]">{children}</span>
);

// Narrow drop-down of the layer row, cuts its value off before the chevron
const LayerSelect = ({ label, value }: { label: string; value: string }) => (
  <div className="relative h-[28px] w-[90px] shrink-0 bg-[#1c1c1c] text-[#c0c0c0]">
    <select aria-label={label} defaultValue={value} className="h-full w-full appearance-none bg-transparent pl-[14px] pr-[30px] outline-none">
      <option>{value}</option>
    </select>
    <ChevronDown className="pointer-events-none absolute right-[9px] top-1/2 -mt-[5px]" />
  </div>
);

const LayerRow = () => (
  <div className="flex h-[34px] shrink-0 items-center border-b-2 border-[#1f1f1f] bg-[#303030]">
    <div className="flex w-[137px] shrink-0 gap-[4px] pl-[8px]">
      <Box><Eye /></Box>
      <span className="w-[26px]" />
      <Box />
      <Box />
    </div>
    <div className="flex w-[64px] shrink-0 items-center gap-[6px] pl-[10px]">
      <button type="button" aria-label="Collapse layer" className="flex"><ChevronDown /></button>
      <span className="h-[24px] w-[24px] bg-[#667ddc]" />
    </div>
    <div className="w-[66px] shrink-0 pl-[11px] text-[#a6a6a6]">1</div>
    <div className="flex w-[460px] shrink-0 items-center gap-[15px] pl-[5px]">
      <Svg w={24} h={24}><path d="M12 1l3 8h9l-7 5.500 3 8.500-8-5-8 5 3-8.500L0 9h9z" fill={G} /></Svg>
      <span className="pt-[3px] font-semibold text-[#a6a6a6]">Shape Layer 1</span>
    </div>
    <div className="flex w-[332px] shrink-0 items-center pl-[5px]">
      <LayerSelect label="Blend mode" value="Normal" />
      <span className="ml-[10px]"><Box /></span>
      <Svg w={26} h={24} className="ml-[10px]">
        <path d="M13 12c1-5-5-5-6 0s3 8 8 6 6-8 3-12-10-5-14 0-4 12 1 16c3 2 7 1 9 0" stroke="#999" strokeWidth="2" />
        <path d="M24 2v7M21 13h3v4M24 18v4h-4" stroke="#999" strokeWidth="2" />
      </Svg>
      <span className="ml-[6px]"><LayerSelect label="Track matte" value="No Matte" /></span>
    </div>
    <div className="flex w-[273px] shrink-0 gap-[4px] pl-[7px]">
      <Box><Shy /></Box>
      <Box><Sun dim /></Box>
      <Box><Svg w={24} h={24}><path d="M3 22L22 2" stroke={G} strokeWidth="2.500" /></Svg></Box>
      <span className="w-[56px]" />
      <Box />
      <Box />
      <Box />
    </div>
    <div className="pl-[14px]"><Num>0:00:10:00</Num></div>
  </div>
);

const TimelineTools = () => (
  <div className="flex h-[71px] shrink-0 pl-[21px]">
    <div className="flex w-[154px] shrink-0 flex-col items-end">
      <div className="h-[40px] whitespace-nowrap text-[30px] font-medium leading-[44px] text-[#2d8ceb]">0:00:00:00</div>
      <div className="whitespace-nowrap text-[19px] leading-[27px] text-[#1c5592]">00000 (24.00 fps)</div>
    </div>
    <label className="ml-[35px] mt-[13px] flex h-[40px] w-[958px] shrink-0 items-center rounded-[4px] border-2 border-[#303030] bg-[#161616] pl-[12px]">
      <SearchGlyph />
      <input aria-label="Search timeline" className="ml-2 w-full bg-transparent outline-none" />
    </label>
    <div className="mt-[12px] flex h-[44px] items-center">
      <button type="button" aria-label="Mini-Flowchart" className="ml-[30px] flex">
        <Svg w={34} h={26}>
          <path d="M0 5h26M17 5v14h5" stroke={G} strokeWidth="2" />
          <path d="M4 1h7v8H4zM21 1h8v8h-8zM21 13h8v7h-8zM25 20h9l-4.500 5z" fill={G} />
        </Svg>
      </button>
      <button type="button" aria-label="Hide Shy Layers" className="ml-[34px] flex">
        <Svg w={32} h={26}>
          <path d="M0 15h32v10H0z" fill="#777" />
          <path d="M3 13c4-1 5-11 13-11s9 10 13 11z" fill={G} />
          <circle cx="12.500" cy="9" r="2.500" fill="#232323" />
          <circle cx="19.500" cy="9" r="2.500" fill="#232323" />
          <path d="M16 13v9" stroke={G} strokeWidth="4" />
        </Svg>
      </button>
      <button type="button" aria-label="Frame Blending" className="ml-[22px] flex">
        <Svg w={28} h={28}>
          <path d="M9 0h19v22H9z" fill={G} />
          <path d="M12 2v18M25 2v18" stroke="#232323" strokeWidth="2" strokeDasharray="2 2" />
          <path d="M16 11h6" stroke="#232323" strokeWidth="2.500" />
          <path d="M0 6h6v18h14v4H0z" fill={G} />
          <path d="M3 8v17" stroke="#232323" strokeWidth="2" strokeDasharray="2 2" />
        </Svg>
      </button>
      <button type="button" aria-label="Motion Blur" className="ml-[24px] flex"><MotionBlur /></button>
      <button type="button" aria-label="Graph Editor" className="ml-[38px] flex">
        <Svg w={32} h={30}>
          <path d="M3 5h28v24H3zM8 0v5M14 0v5M20 0v5M26 0v5M0 10h3M0 16h3M0 22h3" stroke={G} strokeWidth="2" />
          <path d="M6 11c13 0 9 13 21 13" stroke={G} strokeWidth="2.200" />
        </Svg>
      </button>
    </div>
  </div>
);

const seconds = ['0:00s', '01s', '02s', '03s', '04s', '05s', '06s', '07s', '08s', '09s', '10s'];

const Tracks = () => (
  <div className="relative flex min-w-0 flex-1 flex-col overflow-hidden">
    <div className="h-[109px] shrink-0 pt-[10px]">
      <div className="flex h-[20px]">
        <button type="button" aria-label="Navigator start" className="my-[2px] w-[12px] rounded-l-full bg-[#2d8ceb]" />
        <div className="flex-1 border-2 border-black bg-[#686868]" />
        <button type="button" aria-label="Navigator end" className="my-[2px] w-[12px] rounded-r-full bg-[#2d8ceb]" />
      </div>
      <div className="flex h-[38px] justify-between overflow-hidden px-[14px] text-[19px] leading-[30px] text-[#a0a0a0]">
        {seconds.map((s) => (
          <div key={s} className="flex w-0 flex-col items-center">
            <span className="h-[28px] whitespace-nowrap">{s}</span>
            <span className="h-[10px] w-[2px] bg-[#8a8a8a]" />
          </div>
        ))}
      </div>
      <div className="flex h-[34px] border-y-2 border-black px-[2px]">
        <button type="button" aria-label="Work area start" className="w-[10px] rounded-l-[8px] bg-[#2d8ceb]" />
        <div className="flex-1 border-x-2 border-t-2 border-x-black border-t-[#777] bg-[#606060]" />
        <button type="button" aria-label="Work area end" className="w-[10px] rounded-r-[8px] bg-[#2d8ceb]" />
      </div>
      <div className="mx-[14px] h-[6px] bg-[#18bf24]" />
    </div>
    <div className="min-h-0 flex-1 overflow-hidden">
      <div className="flex h-[34px] border-b-2 border-[#222] bg-[#333] px-[14px]">
        <div className="flex-1 border-b-2 border-r-2 border-[#454e7c] bg-[#525d8f]" />
      </div>
      {rows.map((row, i) => (
        <div key={i} className="flex h-[34px] items-center border-b-2 border-r-[14px] border-b-[#222] border-r-[#292929] bg-[#333] pl-[7px] pt-[2px]">
          {row.name !== 'Composite' && (
            <Svg w={14} h={22}>
              <path d="M0 1h14M0 21h14" stroke="#b4b4b4" strokeWidth="2" />
              <path d="M7 1v20" stroke="#a4b0bc" strokeWidth="6" />
            </Svg>
          )}
        </div>
      ))}
    </div>
    {/* current time indicator */}
    <div className="pointer-events-none absolute bottom-0 left-[3px] top-[40px] flex w-[22px] flex-col items-center">
      <Svg w={22} h={27}>
        <path d="M0 0h22v13L11 27 0 13z" fill={BLUE} />
        <path d="M8 13h6M11 13v14" stroke="#9aa4ae" strokeWidth="2" />
      </Svg>
      <span className="w-[2px] flex-1 bg-[#3f8edc]" />
    </div>
  </div>
);

const TimelineFooter = () => (
  <footer className="flex h-[32px] shrink-0">
    <div className="flex w-[1718px] shrink-0 items-center border-t-2 border-black pl-[8px]">
      <button type="button" aria-label="Layer Switches" className="flex h-[30px] w-[34px] items-center justify-center border-2 border-[#303030]">
        <Svg w={24} h={24}>
          <path d="M1 13V1h12v3M5 17V5h12v3" stroke={BLUE} strokeWidth="2.200" />
          <path d="M9 9h13v13H9z" stroke={BLUE} strokeWidth="2.200" />
          <circle cx="15.500" cy="15.500" r="2.500" fill={BLUE} />
        </Svg>
      </button>
      <button type="button" aria-label="Transfer Controls" className="ml-[4px] flex h-[30px] w-[34px] items-center justify-center border-2 border-[#303030]">
        <Svg w={24} h={24}>
          <circle cx="9" cy="9" r="7.500" stroke={BLUE} strokeWidth="2.200" />
          <path d="M10 10h12v12H10z" stroke={BLUE} strokeWidth="2.200" />
          <path d="M10 10h7c0 4-3 7-7 7z" fill={BLUE} />
        </Svg>
      </button>
      <button type="button" aria-label="In Out Duration" className="ml-[4px] flex h-[30px] w-[34px] items-center justify-center border-2 border-[#303030]">
        <Svg w={24} h={24}>
          <path d="M7 1v7l-4 4 4 4v7h10v-7l4-4-4-4V1z" fill="#1c5592" />
          <path d="M7 1v7l-5 4 5 4v7M17 1v7l5 4-5 4v7" stroke={BLUE} strokeWidth="2.200" />
        </Svg>
      </button>
      <button type="button" aria-label="Render Time" className="ml-[8px] flex">
        <Svg w={26} h={20}>
          <circle cx="9" cy="8" r="8" fill={G} />
          <path d="M0 19h21l4-13-5 2-4 8H0z" fill={G} />
          <path d="M20 10V2M22 9l3-5" stroke={G} strokeWidth="2" />
        </Svg>
      </button>
      <span className="ml-[58px] whitespace-nowrap pt-[2px] text-[#a6a6a6]">Frame Render Time:</span>
      <span className="ml-[12px] pt-[2px] font-semibold text-[#6fd3ad]">0ms</span>
      <div className="ml-auto flex items-center pr-[10px]">
        <Svg w={20} h={10}><path d="M0 10l5-6 3 3 5-7 7 10z" fill={G} /></Svg>
        <div className="relative ml-[22px] flex h-[20px] w-[96px] items-center">
          <span className="ml-[14px] h-[4px] flex-1 bg-[#464646]" />
          <input
            type="range"
            aria-label="Timeline zoom"
            defaultValue={0}
            className="absolute inset-0 w-full appearance-none bg-transparent [&::-webkit-slider-thumb]:h-[20px] [&::-webkit-slider-thumb]:w-[20px] [&::-webkit-slider-thumb]:appearance-none [&::-webkit-slider-thumb]:rounded-full [&::-webkit-slider-thumb]:border-[3px] [&::-webkit-slider-thumb]:border-[#8f8f8f] [&::-webkit-slider-thumb]:bg-[#333]"
          />
        </div>
        <Svg w={34} h={14} className="ml-[22px]"><path d="M0 14L10 3l3 3-6 8zM9 14L21 0l13 14z" fill={G} /></Svg>
      </div>
    </div>
  </footer>
);

const Timeline = () => (
  <section className="mx-[2px] mb-[2px] flex min-h-0 flex-[942] flex-col border border-[#2f78be] bg-[#232323]">
    <div className="flex h-[55px] shrink-0 items-center pl-[20px] text-[#b8b8b8]">
      <CloseTab />
      <span className="-mt-[6px] ml-[19px] flex"><Swatch /></span>
      <h2 className="ml-[24px] mr-[22px]">Output</h2>
      <PanelMenu label="Timeline menu" />
    </div>
    <div className="flex min-h-0 flex-1">
      <div className="flex w-[1505px] shrink-0 flex-col overflow-hidden">
        <TimelineTools />
        <ColumnHeads />
        <div className="min-h-0 flex-1 overflow-hidden border-r-2 border-black">
          <LayerRow />
          {rows.map((row, i) => (
            <PropertyRow key={i} row={row} />
          ))}
        </div>
      </div>
      <Tracks />
      <div className="flex w-[34px] shrink-0 flex-col items-center pt-[74px]">
        <Svg w={22} h={28} className="ml-[2px]"><path d="M2 0h18a2 2 0 0 1 2 2v17l-11 9L0 19V2a2 2 0 0 1 2-2z" fill={G} /></Svg>
        <Svg w={30} h={26} className="mt-[13px]">
          <path d="M16 2v13H2z" stroke={G} strokeWidth="2" />
          <path d="M15 5h14v13H15z" fill={G} />
          <circle cx="14" cy="18" r="6" fill="#232323" stroke={G} strokeWidth="2.500" />
        </Svg>
        <div className="mt-[3px] flex w-full flex-1 justify-center bg-[#1e1e1e] pb-[64px] pt-[2px]">
          <div className="w-[30px] rounded-full bg-[#303030]" />
        </div>
      </div>
    </div>
    <TimelineFooter />
  </section>
);

function App() {
  return (
    <main className="flex h-screen flex-col overflow-hidden bg-[#161616] font-['Noto_Sans',sans-serif] text-[21px] leading-7">
      <TitleBar />
      <MenuBar />
      <Toolbar />
      <div className="flex min-h-0 flex-[908] gap-2 px-[2px] pb-2 pt-1">
        <ProjectPanel />
        <CompositionPanel />
        <SidePanels />
      </div>
      <Timeline />
    </main>
  );
}

export default App;
